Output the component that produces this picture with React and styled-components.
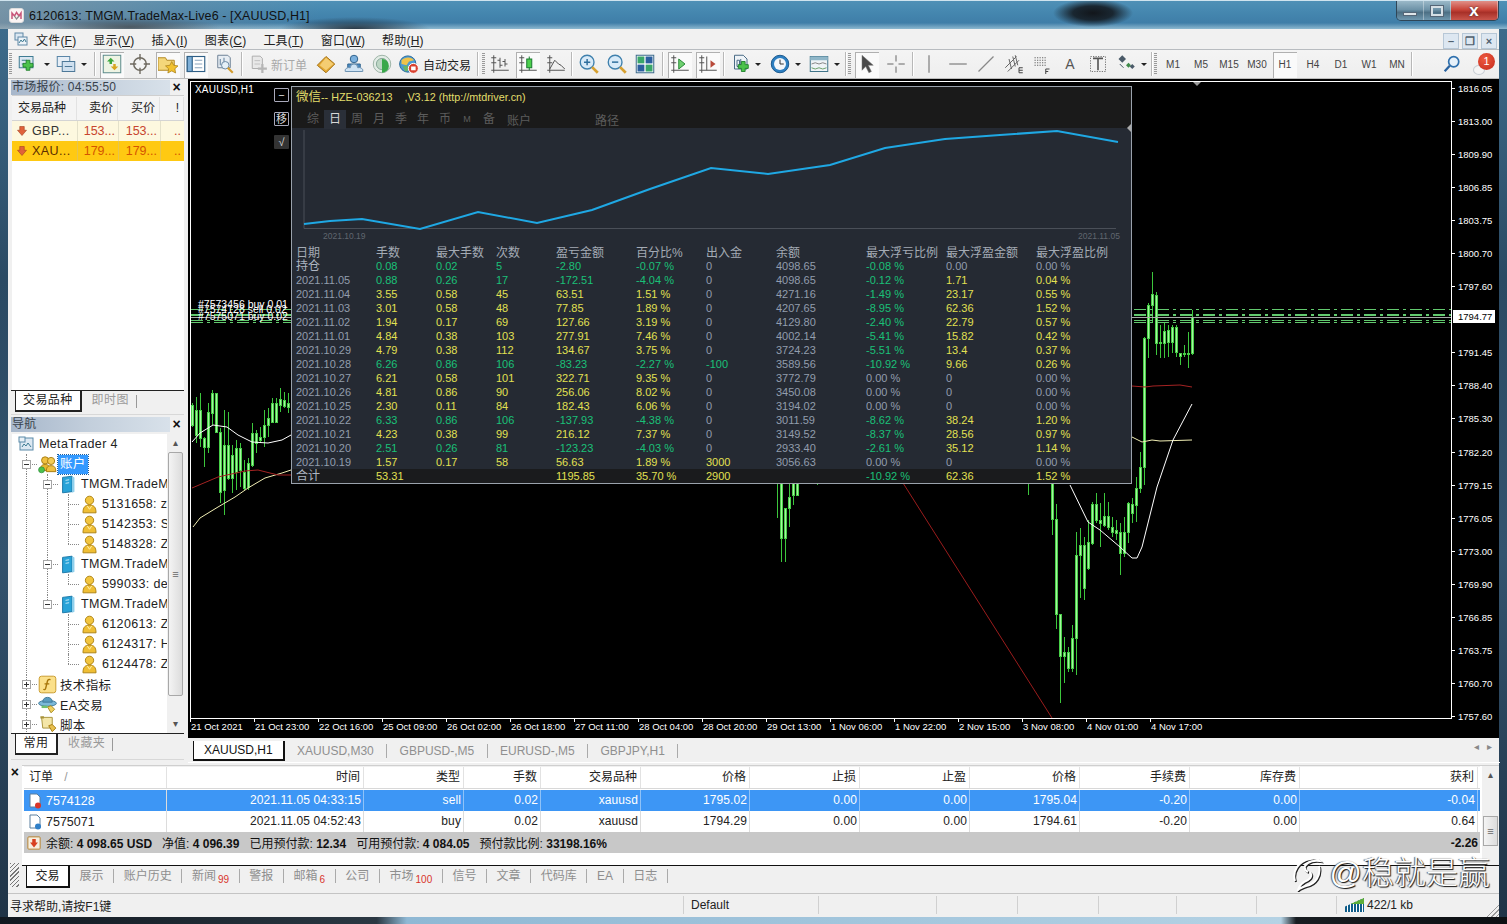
import React from "react"
import styled, { createGlobalStyle } from "styled-components"

const uiFont = `"Liberation Sans", "Noto Sans CJK SC", sans-serif`

const G = ({ s = 16, children }) => <svg width={s} height={s} viewBox="0 0 16 16" style={{ display: "block", position: "relative", flex: "none" }}>{children}</svg>

const Plus = ({ x = 8, y = 8 }) => (
  <path d={`M${x + 2.5} ${y}h3v2.5h2.5v3h-2.5v2.5h-3v-2.5h-2.5v-3h2.5z`} fill="#4cc24c" stroke="#1d7f2a" strokeWidth=".7" />
)
const Axes = () => <path d="M3 1v14M1 13h14M1 3h4M1 7h4" stroke="#555" strokeWidth=".8" fill="none" />

const icons = {
  newChart: <><rect x="1" y="2" width="11" height="9" fill="#dbe7f2" stroke="#3f7c93" strokeWidth=".8" /><path d="M3 5h4M3 8h2" stroke="#3f7c93" strokeWidth=".8" /><Plus x={4} y={5} /></>,
  profile: <><rect x="1" y="2" width="10" height="8" fill="#e6eef6" stroke="#5a86a8" strokeWidth=".8" /><rect x="5" y="6" width="10" height="8" fill="#cfe0ef" stroke="#4d7898" strokeWidth=".8" /><path d="M7 10h6" stroke="#4d7898" strokeWidth=".8" /></>,
  market: <><rect x="1" y="1" width="14" height="14" fill="#eef4e4" stroke="#5b8a8a" strokeWidth=".8" /><path d="M4 6l3-3 3 3H8v2H6V6z" fill="#3ca83c" /><path d="M7 10l3 3 3-3h-2V8H9v2z" fill="#d8a520" /></>,
  target: <><circle cx="8" cy="8" r="5" fill="#f4f4f4" stroke="#6f6a60" strokeWidth="1.2" /><path d="M8 0v5M8 11v5M0 8h5M11 8h5" stroke="#6f6a60" strokeWidth="1.1" /></>,
  fav: <><path d="M0 3h6l1 2h6v8H0z" fill="#f4d77a" stroke="#b58a26" strokeWidth=".8" /><path d="M11 6l1.5 3 3.5.5-2.5 2.3.6 3.4-3.1-1.7-3.1 1.7.6-3.4L6 9.5 9.5 9z" fill="#f2c230" stroke="#a9801a" strokeWidth=".6" /></>,
  nav: <><rect x="1" y="2" width="14" height="12" fill="#fff" stroke="#2f5f86" strokeWidth=".9" /><rect x="1" y="2" width="4" height="12" fill="#7fb0d8" stroke="#2f5f86" strokeWidth=".9" /><path d="M7 5h6M7 8h6M7 11h6" stroke="#8aa4bc" strokeWidth=".8" /></>,
  tester: <><path d="M3 1h8l2 2v8H3z" fill="#e8eef4" stroke="#6f8296" strokeWidth=".8" /><path d="M5 4v5M8 3v5" stroke="#5f7f9a" strokeWidth=".8" /><circle cx="9" cy="9" r="3" fill="#e5f0f8" stroke="#6c8aa5" strokeWidth=".8" /><path d="M11 11l4 4" stroke="#d29b2d" strokeWidth="1.7" /></>,
  order: <><path d="M2 1h7l2 2v9H2z" fill="#e8e8e8" stroke="#a8a8a8" strokeWidth=".8" /><path d="M4 5h5M4 8h5" stroke="#bdbdbd" strokeWidth=".8" /><path d="M10 8h2v3h3v2h-3v3h-2v-3H7v-2h3z" fill="#b5b5b5" /></>,
  ordersBook: <><path d="M1 9l7-7 7 6-7 7z" fill="#e3a72f" stroke="#a5741a" strokeWidth=".8" /><path d="M3 9l5 4 6-5-6-5z" fill="#f4cd72" /></>,
  people: <><circle cx="8" cy="4" r="3" fill="#7bb0dd" stroke="#33658f" strokeWidth=".8" /><path d="M3 8h10v3H3z" fill="#4e8cc2" stroke="#33658f" strokeWidth=".8" /><path d="M1 14a3 2.5 0 0 1 4-3 3 3 0 0 1 6 0 3 2.5 0 0 1 4 3z" fill="#cfe3f4" stroke="#6e93b2" strokeWidth=".8" /></>,
  signal: <><circle cx="8" cy="8" r="7" fill="#e3ece6" stroke="#9fb5a8" strokeWidth=".8" /><circle cx="8" cy="8" r="4.5" fill="#bcd6c4" stroke="#8aa99a" strokeWidth=".8" /><path d="M8 4a4 4 0 0 1 0 11z" fill="#39a84a" /></>,
  auto: <><circle cx="7" cy="8" r="6.5" fill="#4b9bd4" stroke="#2a6b9c" strokeWidth=".8" /><path d="M2 5c3-3 8-3 10 0l-4 1-2 3-4-1z" fill="#efc34a" /><path d="M3 10l4-1 1 4-3 1z" fill="#66b46a" /><circle cx="11.5" cy="11.5" r="4" fill="#d9412f" stroke="#fff" strokeWidth=".8" /><rect x="9.7" y="10" width="3.6" height="3" fill="#fff" /></>,
  bars: <><Axes /><path d="M8 3v8M6 5h2M8 9h2M12 4v6M10 6h2M12 8h2" stroke="#555" strokeWidth=".8" fill="none" /></>,
  candle: <><Axes /><path d="M9 2v11" stroke="#1b7a30" strokeWidth=".8" /><rect x="7" y="4" width="4" height="7" fill="#4dd04d" stroke="#1b7a30" strokeWidth=".8" /></>,
  line: <><Axes /><path d="M3 12l4-7 3 3 2 1 3 3" stroke="#555" strokeWidth=".8" fill="none" /></>,
  zoomIn: <><circle cx="6.5" cy="6.5" r="5.5" fill="#d8eaf8" stroke="#3f80ad" strokeWidth="1.1" /><path d="M4 6.5h5M6.5 4v5" stroke="#2f6f9e" strokeWidth="1.2" /><path d="M10.5 10.5l4.5 4.5" stroke="#d6a030" strokeWidth="2.2" /></>,
  zoomOut: <><circle cx="6.5" cy="6.5" r="5.5" fill="#d8eaf8" stroke="#3f80ad" strokeWidth="1.1" /><path d="M4 6.5h5" stroke="#2f6f9e" strokeWidth="1.2" /><path d="M10.5 10.5l4.5 4.5" stroke="#d6a030" strokeWidth="2.2" /></>,
  tile: <><rect x="1" y="1" width="14" height="14" fill="#fff" stroke="#3b6a8a" strokeWidth=".8" /><rect x="2" y="2" width="5.5" height="5.5" fill="#3aa66a" /><rect x="8.5" y="2" width="5.5" height="5.5" fill="#2b5f9e" /><rect x="2" y="8.5" width="5.5" height="5.5" fill="#2b5f9e" /><rect x="8.5" y="8.5" width="5.5" height="5.5" fill="#3aa66a" /></>,
  scrollAuto: <><Axes /><path d="M7 4l5 4-5 4z" fill="#6fd06f" stroke="#2b8a3a" strokeWidth=".8" /></>,
  shift: <><Axes /><path d="M7 2v11" stroke="#555" strokeWidth=".8" /><path d="M14 8l-4-3v6z" fill="#b84a3a" /></>,
  addInd: <><path d="M2 1h7l3 3v8H2z" fill="#eef3f7" stroke="#4a6b85" strokeWidth=".8" /><path d="M4 5h2v5H4zM7 4v7" stroke="#4a6b85" strokeWidth=".8" fill="none" /><Plus x={5} y={6} /></>,
  clock: <><circle cx="8" cy="8" r="7" fill="#2d7fc1" stroke="#1c5a8f" strokeWidth=".8" /><circle cx="8" cy="8" r="4.8" fill="#f4f7fa" /><path d="M8 4.5V8h3" stroke="#333" strokeWidth=".8" fill="none" /></>,
  template: <><rect x="1" y="2" width="14" height="12" fill="#eef3f6" stroke="#3f7388" strokeWidth=".8" /><rect x="1" y="2" width="14" height="3" fill="#8fb6c8" /><path d="M2 8l3-1 3 1 3-1 3 1" stroke="#888" strokeWidth=".8" fill="none" /><path d="M2 11l3 1 3-1 3 1 3-1" stroke="#6fa36f" strokeWidth=".8" fill="none" /></>,
  cursor: <path d="M4 1l9 8H9l2.5 5-2 1L7 10l-3 3z" fill="#4a4a4a" stroke="#777" strokeWidth=".4" />,
  cross: <path d="M8 1v5M8 10v5M1 8h5M10 8h5" stroke="#666" strokeWidth=".8" />,
  vline: <path d="M8 1v14" stroke="#666" strokeWidth=".8" />,
  hline: <path d="M1 8h14" stroke="#666" strokeWidth=".8" />,
  trend: <path d="M2 14L14 2" stroke="#888" />,
  channel: <><path d="M1 11l9-9M3 14l9-9M4 4l2 8M7 2l2 8M9 1l2 8" stroke="#666" strokeWidth=".8" fill="none" /><path d="M12 11h3M12 13h3M12 15h3M12 11v4" stroke="#444" strokeWidth=".8" /></>,
  fibo: <><path d="M2 3h10M2 5h10M2 7h10M2 9h10" stroke="#666" strokeWidth=".8" strokeDasharray="1 1" /><path d="M11 12h3M11 14h2M11 12v4" stroke="#444" strokeWidth=".8" /></>,
  label: <><rect x="2" y="2" width="12" height="12" fill="none" stroke="#777" strokeWidth=".8" strokeDasharray="1 1" /><path d="M4 3.5h8M8 3.5V13" stroke="#555" strokeWidth="1.3" /></>,
  arrows: <><path d="M5 1L2 4l3 3 3-3z" fill="#4a5a68" /><path d="M8 9l2-2 2 2-2 2z" fill="#3f8a4a" /><path d="M13 8l2 2-2 2-2-2z" fill="#4a5a68" /><path d="M3 8l3 3" stroke="#4a5a68" strokeWidth=".8" /></>,
  search: <><circle cx="9.5" cy="6" r="4.5" fill="#e7f1fa" stroke="#2f70ad" strokeWidth="1.5" /><path d="M6 9.5L1.5 14.5" stroke="#2a63a0" strokeWidth="2" /></>,
  mt: <><rect x="2" y="2" width="13" height="12" fill="#dde8f2" stroke="#5a8aa8" /><rect x="1" y="1" width="6" height="5" fill="#e8f0f6" stroke="#5a8aa8" /><path d="M4 11l2-3 2 2 2-3 3 4" stroke="#3f7c93" fill="none" /></>,
  accounts: <><circle cx="6" cy="4.5" r="3" fill="#f0c040" stroke="#a87c10" strokeWidth=".8" /><path d="M2 13c0-4 1.5-5 4-5s4 1 4 5z" fill="#e8b830" stroke="#a87c10" strokeWidth=".8" /><circle cx="11" cy="5" r="3" fill="#f4cc55" stroke="#a87c10" strokeWidth=".8" /><path d="M7 14c0-4 1.5-5 4-5s4 1 4 5z" fill="#f0c040" stroke="#a87c10" strokeWidth=".8" /><circle cx="3" cy="12.5" r="2.5" fill="#4cc24c" stroke="#2a8a3a" strokeWidth=".6" /></>,
  server: <><path d="M3 2l8-1v13l-8 1z" fill="#29a3d8" stroke="#1c78a8" strokeWidth=".8" /><path d="M11 1l2 1v12l-2 1z" fill="#8fd0ec" /><path d="M5.500 4.500l3-.5M5.500 7l3-.5" stroke="#c9ecfa" strokeWidth=".8" /></>,
  person: <><circle cx="8" cy="4.5" r="3.500" fill="#f2c53f" stroke="#ad8212" strokeWidth=".8" /><path d="M2.500 15c0-5 2-6.500 5.500-6.500s5.500 1.500 5.500 6.500z" fill="#efbe34" stroke="#ad8212" strokeWidth=".8" /><path d="M6 9l2 3 2-3" stroke="#fff2b0" strokeWidth=".8" fill="none" /></>,
  func: <><rect x="1" y="1" width="14" height="14" rx="2" fill="#fbe08a" stroke="#c89a2a" strokeWidth=".8" /><path d="M10.500 4c-2 -1-2.500 .5-3 3l-1 4c-.3 1.500-1.200 1.500-2 1M5.500 7.500h4" stroke="#a8760a" strokeWidth="1.200" fill="none" /></>,
  ea: <><ellipse cx="8" cy="7" rx="7.500" ry="2.500" fill="#7bb8d8" stroke="#3f7a9a" strokeWidth=".8" /><path d="M4 6c0-3 2-4 4-4s4 1 4 4z" fill="#5a9cc0" stroke="#3f7a9a" strokeWidth=".8" /><path d="M8 10l3-1 3 3-3 3z" fill="#f0d060" stroke="#a88a20" strokeWidth=".8" /><path d="M3 9h5v2H3z" fill="#6fbf6f" /></>,
  script: <><path d="M3 2h9v9H4z" fill="#f4e6a8" stroke="#a8923a" strokeWidth=".8" /><path d="M2 2h3M11 11h3" stroke="#a8923a" strokeWidth="1.800" /><path d="M9 9l3-1 3 3-3 3z" fill="#e8c050" stroke="#a87c10" strokeWidth=".8" /></>,
  sell: <><path d="M3 1h7l3 3v10H3z" fill="#fff" stroke="#5a7f9e" /><circle cx="11" cy="12.500" r="3" fill="#d9362a" /></>,
  buy: <><path d="M3 1h7l3 3v10H3z" fill="#fff" stroke="#5a7f9e" /><circle cx="11" cy="12.500" r="3" fill="#2f7fc8" /></>,
  downArrow: <path d="M5 2h6v5h3l-6 7-6-7h3z" fill="#e0623a" stroke="#a5401f" strokeWidth=".8" />,
  balance: <><rect x="1" y="1" width="14" height="14" rx="1" fill="#f6efe0" stroke="#b47a1f" /><path d="M6 3.500h4v4h2.500L8 13 3.500 7.500H6z" fill="#d8401f" /></>,
}

const Icon = ({ name, s }) => <G s={s}>{icons[name]}</G>
const TI = ({ n }) => <Icon name={n} s={20} />

const AppMark = () => (
  <svg width="15" height="15" viewBox="0 0 15 15" style={{ display: "block" }}>
    <rect x=".5" y=".5" width="14" height="14" rx="2.5" fill="#fbf4f4" stroke="#ddd" />
    <path d="M3 11V5l2.5 3L7.5 4.5 10 8l2-3v6" fill="none" stroke="#c8557a" strokeWidth="1.5" />
    <path d="M5.5 8l2 3 2.5-3" fill="none" stroke="#8a8a8a" strokeWidth="1.2" />
  </svg>
)

const MenuMark = () => (
  <svg width="14" height="14" viewBox="0 0 14 14" style={{ display: "block" }}>
    <rect x="1" y="1" width="8" height="7" fill="#dce8f2" stroke="#5f88a6" />
    <rect x="4" y="5" width="9" height="8" fill="#edf3f8" stroke="#5f88a6" />
    <path d="M5 11l2-3 1.500 2 2-3 1.500 3" stroke="#3f7c93" fill="none" />
  </svg>
)

const SwirlMark = () => (
  <svg width="32" height="36" viewBox="0 0 32 36" style={{ display: "block", filter: "drop-shadow(1px 1px 0 #222)" }}>
    <path d="M4 26C1 17 7 6 19 4c4-1 8 0 10 2-5-1-12 0-15 5-1 3 1 5 3 6" fill="none" stroke="#fff" strokeWidth="2" />
    <path d="M28 11c2 9-3 18-13 20-3 1-6 2-8 4 1-4 5-8 10-10 3-2 4-5 2-8" fill="none" stroke="#fff" strokeWidth="2" />
  </svg>
)

const menus = [["文件", "F"], ["显示", "V"], ["插入", "I"], ["图表", "C"], ["工具", "T"], ["窗口", "W"], ["帮助", "H"]]

const priceLabels = ["1816.05", "1813.00", "1809.90", "1806.85", "1803.75", "1800.70", "1797.60", "", "1791.45", "1788.40", "1785.30", "1782.20", "1779.15", "1776.05", "1773.00", "1769.90", "1766.85", "1763.75", "1760.70", "1757.60"]

const timeLabels = ["21 Oct 2021", "21 Oct 23:00", "22 Oct 16:00", "25 Oct 09:00", "26 Oct 02:00", "26 Oct 18:00", "27 Oct 11:00", "28 Oct 04:00", "28 Oct 20:00", "29 Oct 13:00", "1 Nov 06:00", "1 Nov 22:00", "2 Nov 15:00", "3 Nov 08:00", "4 Nov 01:00", "4 Nov 17:00"]

// x, body top, body bottom, wick top, wick bottom (page pixels)
const candles = [
  [192, 405, 425, 403, 427], [196, 410, 435, 397, 443], [200, 410, 438, 393, 447], [204, 438, 447, 437, 467], [208, 412, 447, 403, 453],
  [212, 393, 413, 390, 425], [216, 393, 432, 393, 433], [220, 432, 492, 428, 503], [224, 445, 490, 410, 515], [228, 445, 478, 412, 480],
  [232, 455, 478, 445, 493], [236, 448, 472, 440, 490], [240, 448, 470, 443, 487], [244, 472, 488, 460, 490], [248, 463, 487, 458, 490],
  [252, 433, 465, 423, 467], [256, 433, 443, 430, 453], [260, 437, 440, 427, 443], [264, 425, 437, 410, 447], [268, 418, 425, 408, 437],
  [272, 403, 422, 398, 423], [276, 403, 422, 398, 423], [280, 399, 405, 388, 412], [284, 400, 406, 392, 408], [288, 403, 407, 393, 413],
  [777, 483, 483, 483, 518], [781, 483, 538, 483, 562], [785, 508, 538, 508, 562], [789, 497, 508, 483, 527], [793, 483, 495, 483, 505], [797, 483, 495, 483, 495],
  [817, 483, 483, 483, 485], [1028, 483, 483, 483, 495],
  [1052, 483, 519, 483, 535], [1056, 519, 614, 504, 629], [1060, 614, 656, 614, 703], [1064, 652, 656, 637, 683], [1068, 652, 668, 647, 672],
  [1072, 638, 668, 625, 672], [1076, 555, 638, 532, 675], [1080, 545, 555, 528, 598], [1084, 545, 588, 537, 600], [1088, 542, 568, 520, 570],
  [1092, 504, 543, 502, 545], [1096, 504, 520, 493, 523], [1100, 520, 523, 503, 547], [1104, 516, 525, 493, 527], [1108, 516, 527, 502, 530],
  [1112, 527, 532, 517, 537], [1116, 530, 533, 520, 540], [1120, 532, 553, 523, 575], [1124, 532, 553, 517, 557], [1128, 503, 532, 502, 543],
  [1132, 504, 513, 498, 523], [1136, 488, 505, 477, 522], [1140, 467, 488, 452, 493], [1144, 338, 467, 337, 485], [1148, 305, 338, 303, 358],
  [1152, 294, 305, 272, 323], [1156, 295, 343, 292, 355], [1160, 342, 343, 325, 358], [1164, 331, 343, 323, 358], [1168, 330, 342, 325, 357],
  [1172, 327, 342, 325, 353], [1176, 327, 352, 325, 357], [1180, 353, 356, 353, 365], [1184, 353, 354, 345, 357], [1188, 353, 354, 332, 368],
  [1192, 317, 353, 310, 355],
]

const stats = [
  ["持仓", "0.08", "0.02", "5", "-2.80", "-0.07 %", "0", "4098.65", "-0.08 %", "0.00", "0.00 %"],
  ["2021.11.05", "0.88", "0.26", "17", "-172.51", "-4.04 %", "0", "4098.65", "-0.12 %", "1.71", "0.04 %"],
  ["2021.11.04", "3.55", "0.58", "45", "63.51", "1.51 %", "0", "4271.16", "-1.49 %", "23.17", "0.55 %"],
  ["2021.11.03", "3.01", "0.58", "48", "77.85", "1.89 %", "0", "4207.65", "-8.95 %", "62.36", "1.52 %"],
  ["2021.11.02", "1.94", "0.17", "69", "127.66", "3.19 %", "0", "4129.80", "-2.40 %", "22.79", "0.57 %"],
  ["2021.11.01", "4.84", "0.38", "103", "277.91", "7.46 %", "0", "4002.14", "-5.41 %", "15.82", "0.42 %"],
  ["2021.10.29", "4.79", "0.38", "112", "134.67", "3.75 %", "0", "3724.23", "-5.51 %", "13.4", "0.37 %"],
  ["2021.10.28", "6.26", "0.86", "106", "-83.23", "-2.27 %", "-100", "3589.56", "-10.92 %", "9.66", "0.26 %"],
  ["2021.10.27", "6.21", "0.58", "101", "322.71", "9.35 %", "0", "3772.79", "0.00 %", "0", "0.00 %"],
  ["2021.10.26", "4.81", "0.86", "90", "256.06", "8.02 %", "0", "3450.08", "0.00 %", "0", "0.00 %"],
  ["2021.10.25", "2.30", "0.11", "84", "182.43", "6.06 %", "0", "3194.02", "0.00 %", "0", "0.00 %"],
  ["2021.10.22", "6.33", "0.86", "106", "-137.93", "-4.38 %", "0", "3011.59", "-8.62 %", "38.24", "1.20 %"],
  ["2021.10.21", "4.23", "0.38", "99", "216.12", "7.37 %", "0", "3149.52", "-8.37 %", "28.56", "0.97 %"],
  ["2021.10.20", "2.51", "0.26", "81", "-123.23", "-4.03 %", "0", "2933.40", "-2.61 %", "35.12", "1.14 %"],
  ["2021.10.19", "1.57", "0.17", "58", "56.63", "1.89 %", "3000", "3056.63", "0.00 %", "0", "0.00 %"],
]
const statHead = ["日期", "手数", "最大手数", "次数", "盈亏金额", "百分比%", "出入金", "余额", "最大浮亏比例", "最大浮盈金额", "最大浮盈比例"]
const statTotal = ["合计", "53.31", "", "", "1195.85", "35.70 %", "2900", "", "-10.92 %", "62.36", "1.52 %"]

const GREEN = "#1ac078"
const YELLOW = "#e2e052"
const GREY = "#929dad"

function statColor(row, i) {
  const loss = row[4].startsWith("-")
  if (i === 0) return GREY
  if (i === 7) return GREY
  if (i === 8) return row[i].startsWith("-") ? GREEN : GREY
  if (i === 6) return row[i] === "0" ? GREY : row[i].startsWith("-") ? GREEN : YELLOW
  if (i === 9 || i === 10) return parseFloat(row[i]) === 0 ? GREY : YELLOW
  return loss ? GREEN : YELLOW
}

const tree = [
  { root: true, icon: "mt", label: "MetaTrader 4" },
  { guides: [], box: "minus", icon: "accounts", label: "账户", selected: true },
  { guides: [1], box: "minus", icon: "server", label: "TMGM.TradeMax" },
  { guides: [1, 1], icon: "person", label: "5131658: zl" },
  { guides: [1, 1], icon: "person", label: "5142353: S" },
  { guides: [1, 1], end: true, icon: "person", label: "5148328: Z" },
  { guides: [1], box: "minus", icon: "server", label: "TMGM.TradeMax" },
  { guides: [1, 1], end: true, icon: "person", label: "599033: de" },
  { guides: [1], box: "minus", end: true, icon: "server", label: "TMGM.TradeMax" },
  { guides: [1, 0], icon: "person", label: "6120613: Z" },
  { guides: [1, 0], icon: "person", label: "6124317: H" },
  { guides: [1, 0], end: true, icon: "person", label: "6124478: Z" },
  { guides: [], box: "plus", icon: "func", label: "技术指标" },
  { guides: [], box: "plus", icon: "ea", label: "EA交易" },
  { guides: [], box: "plus", icon: "script", label: "脚本" },
]

const orderCols = "143px 197px 100px 77px 100px 109px 110px 110px 110px 110px 110px 178px"
const orderHead = ["时间", "类型", "手数", "交易品种", "价格", "止损", "止盈", "价格", "手续费", "库存费", "获利"]
const orders = [
  { id: "7574128", icon: "sell", on: true, cells: ["2021.11.05 04:33:15", "sell", "0.02", "xauusd", "1795.02", "0.00", "0.00", "1795.04", "-0.20", "0.00", "-0.04"] },
  { id: "7575071", icon: "buy", cells: ["2021.11.05 04:52:43", "buy", "0.02", "xauusd", "1794.29", "0.00", "0.00", "1794.61", "-0.20", "0.00", "0.64"] },
]

const termTabs = [["展示"], ["账户历史"], ["新闻", "99"], ["警报"], ["邮箱", "6"], ["公司"], ["市场", "100"], ["信号"], ["文章"], ["代码库"], ["EA"], ["日志"]]
const chartTabs = ["XAUUSD,M30", "GBPUSD-,M5", "EURUSD-,M5", "GBPJPY,H1"]
const statusCells = [676, 135, 118, 81, 81, 78, 80, 80]
const overlayTabs = ["综", "日", "周", "月", "季", "年", "币", "M", "备"]

function PriceChart() {
  return (
    <ChartSvg viewBox="191 82 1260 636">
      <g shapeRendering="crispEdges">
        {candles.map(([x, bt, bb, wt, wb]) => (
          <g key={x}>
            <line x1={x + 0.5} x2={x + 0.5} y1={wt} y2={wb} stroke="#3cc63c" />
            {bb > bt && <rect x={x - 0.5} y={bt} width="2" height={bb - bt} fill="#a6f5a0" stroke="#47cf47" />}
          </g>
        ))}
      </g>
      <g fill="none" strokeWidth="1">
        <polyline stroke="#fff" points="192,442 200,433 213,425 227,427 238,435 252,442 268,443 282,440 291,435" />
        <polyline stroke="#f1eeb4" points="193,527 200,518 218,507 235,497 248,488 265,478 282,473 291,470" />
        <polyline stroke="#a52323" points="192,488 218,477 245,471 258,470 278,475 291,475" />
        <polyline stroke="#a52323" points="1132,386 1145,387 1153,386 1180,385 1192,387" />
        <polyline stroke="#f1eeb4" points="1132,437 1142,442 1152,440 1160,441 1192,440" />
        <polyline stroke="#fff" points="1070,485 1088,522 1100,530 1120,547 1132,558 1137,558 1142,547 1157,487 1173,440 1192,404" />
        <line stroke="#9a1c1c" x1="903" y1="483" x2="1052" y2="718" />
      </g>
      <g stroke="#62c96e" strokeDasharray="12 4 3 4" shapeRendering="crispEdges">
        <line x1="191" x2="1451" y1="309.5" y2="309.5" />
        <line x1="191" x2="1451" y1="315" y2="315" strokeWidth="2" />
        <line x1="191" x2="1451" y1="320.5" y2="320.5" />
        <line x1="191" x2="1451" y1="322.5" y2="322.5" />
      </g>
      <line x1="191" x2="1451" y1="317.5" y2="317.5" stroke="#a8a8a8" shapeRendering="crispEdges" />
      <g fill="#fff" fontSize="10.5" fontFamily="Liberation Sans">
        <text x="198" y="308">#7573456 buy 0.01</text>
        <text x="198" y="313">#7574128 sell 0.02</text>
        <text x="198" y="320">#7575071 buy 0.02</text>
      </g>
    </ChartSvg>
  )
}

function StatsOverlay() {
  return (
    <Overlay>
      <OverlayHead>
        <OverlayTitle><big>微信</big>-- HZE-036213 &nbsp; &nbsp;,V3.12 (http://mtdriver.cn)</OverlayTitle>
        <OverlayTabs>
          {overlayTabs.map(t => <OverlayTab key={t} $on={t === "日"} $small={t === "M"}>{t}</OverlayTab>)}
          <OverlayLink>账户</OverlayLink>
          <OverlayLink $far>路径</OverlayLink>
        </OverlayTabs>
      </OverlayHead>
      <Curve viewBox="292 128 838 115">
        <path d="M304 130V228.5H1116" fill="none" stroke="#4a4f58" />
        <polyline fill="none" stroke="#1fa8e4" strokeWidth="2" points="304,224 330,221 362,219 420,229 478,212 537,223 592,210 650,189 711,168 768,174 830,165 885,148 945,139 1000,135 1057,131 1118,142" />
        <text x="323" y="239" fill="#60666f" fontSize="8.5" fontFamily="Liberation Sans">2021.10.19</text>
        <text x="1078" y="239" fill="#60666f" fontSize="8.5" fontFamily="Liberation Sans">2021.11.05</text>
      </Curve>
      <StatRow $head>{statHead.map(h => <span key={h}>{h}</span>)}</StatRow>
      {stats.map(row => (
        <StatRow key={row[0]}>
          {row.map((c, i) => <StatCell key={i} $c={i === 0 && row[0] === "持仓" ? "#aeb6c2" : statColor(row, i)} $big={i === 0 && row[0] === "持仓"}>{c}</StatCell>)}
        </StatRow>
      ))}
      <StatRow $total>
        {statTotal.map((c, i) => <StatCell key={i} $c={i === 0 ? "#aeb6c2" : i === 8 ? GREEN : YELLOW} $big={i === 0}>{c}</StatCell>)}
      </StatRow>
    </Overlay>
  )
}

function TreeRow({ item }) {
  if (item.root) {
    return (
      <Row $root>
        <Icon name={item.icon} />
        <RowLabel>{item.label}</RowLabel>
      </Row>
    )
  }
  return (
    <Row>
      {item.guides.map((g, i) => <Guide key={i} $on={g} />)}
      <Node $end={item.end}>
        {item.box && <Expander $plus={item.box === "plus"} />}
      </Node>
      <IconSlot><Icon name={item.icon} s={19} /></IconSlot>
      <RowLabel $selected={item.selected}>{item.label}</RowLabel>
    </Row>
  )
}

export default function App() {
  return (
    <Frame>
      <GlobalStyle />
      <TitleBar>
        <AppMark />
        <TitleText>6120613: TMGM.TradeMax-Live6 - [XAUUSD,H1]</TitleText>
        <Captions>
          <Caption><CaptionBar /></Caption>
          <Caption><CaptionBox /></Caption>
          <Caption $close>x</Caption>
        </Captions>
      </TitleBar>
      <Client>
        <MenuBar>
          <MenuLogo><MenuMark /></MenuLogo>
          {menus.map(([t, k]) => <MenuItem key={k}>{t}(<u>{k}</u>)</MenuItem>)}
          <MdiButtons>
            <MdiButton>–</MdiButton>
            <MdiButton>❐</MdiButton>
            <MdiButton>×</MdiButton>
          </MdiButtons>
        </MenuBar>
        <ToolBar>
          <Grip />
          <Tool><TI n="newChart" /></Tool><Caret $w={10} />
          <Tool><TI n="profile" /></Tool><Caret $w={8} />
          <Sep $l={6} $r={2} />
          <Tool $on><TI n="market" /></Tool>
          <Tool><TI n="target" /></Tool>
          <Tool $on><TI n="fav" /></Tool>
          <Tool $on><TI n="nav" /></Tool>
          <Tool><TI n="tester" /></Tool>
          <Sep $l={3} $r={2} />
          <TextTool $pl={5} $gap={3} $w={67} $off><Icon name="order" s={18} />新订单</TextTool>
          <Tool><TI n="ordersBook" /></Tool>
          <Tool><TI n="people" /></Tool>
          <Tool><TI n="signal" /></Tool>
          <TextTool $pl={3} $gap={4} $w={75}><Icon name="auto" s={20} />自动交易</TextTool>
          <Sep $l={6} $r={2} />
          <Grip $w={5} />
          <Tool><TI n="bars" /></Tool>
          <Tool $on><TI n="candle" /></Tool>
          <Tool><TI n="line" /></Tool>
          <Sep $l={1} $r={2} />
          <Tool><TI n="zoomIn" /></Tool>
          <Tool><TI n="zoomOut" /></Tool>
          <Tool><TI n="tile" /></Tool>
          <Sep $l={3} $r={2} />
          <Tool $on><TI n="scrollAuto" /></Tool>
          <Tool $on><TI n="shift" /></Tool>
          <Sep $l={1} $r={3} />
          <Tool><TI n="addInd" /></Tool><Caret $w={8} $ml={-2} />
          <Tool $ml={4}><TI n="clock" /></Tool><Caret $w={8} />
          <Tool $ml={3}><TI n="template" /></Tool><Caret $w={8} />
          <Sep $l={4} $r={0} />
          <Grip />
          <Tool $on><TI n="cursor" /></Tool>
          <Tool $ml={1}><TI n="cross" /></Tool>
          <Sep $l={2} $r={1} />
          <Tool><TI n="vline" /></Tool>
          <Tool $ml={1}><TI n="hline" /></Tool>
          <Tool><TI n="trend" /></Tool>
          <Tool><TI n="channel" /></Tool>
          <Tool><TI n="fibo" /></Tool>
          <Tool><LetterA>A</LetterA></Tool>
          <Tool><TI n="label" /></Tool>
          <Tool><TI n="arrows" /></Tool><Caret $w={8} />
          <Sep $l={3} $r={0} />
          <Grip />
          {["M1", "M5", "M15", "M30", "H1", "H4", "D1", "W1", "MN"].map(p => <Tool key={p} $on={p === "H1"}><Period>{p}</Period></Tool>)}
          <Sep $l={0} $r={0} />
          <ToolRight>
            <Tool><Icon name="search" s={18} /></Tool>
            <Tool><ChatBubble /><Badge>1</Badge></Tool>
          </ToolRight>
        </ToolBar>
        <Workspace>
          <Sidebar>
            <MarketPanel>
              <PanelTitle>市场报价: 04:55:50<Close>×</Close></PanelTitle>
              <QuoteHead>
                <span>交易品种</span><span>卖价</span><span>买价</span><span>!</span>
              </QuoteHead>
              <QuoteRow>
                <Symbol><Icon name="downArrow" s={12} />GBP...</Symbol><Price>153...</Price><Price>153...</Price><Price>..</Price>
              </QuoteRow>
              <QuoteRow $on>
                <Symbol><Icon name="downArrow" s={12} />XAU...</Symbol><Price>179...</Price><Price>179...</Price><Price>..</Price>
              </QuoteRow>
              <PanelFill />
              <PanelTabs>
                <PanelTab $on>交易品种</PanelTab>
                <PanelTab $sep>即时图</PanelTab>
              </PanelTabs>
            </MarketPanel>
            <NavPanel>
              <PanelTitle>导航<Close>×</Close></PanelTitle>
              <NavBody>
                <NavList>{tree.map((item, i) => <TreeRow key={i} item={item} />)}</NavList>
                <NavScroll>
                  <ScrollArrow>▴</ScrollArrow>
                  <ScrollThumb>≡</ScrollThumb>
                  <ScrollArrow>▾</ScrollArrow>
                </NavScroll>
              </NavBody>
              <PanelTabs $nav>
                <PanelTab $on $w={43}>常用</PanelTab>
                <PanelTab $sep>收藏夹</PanelTab>
              </PanelTabs>
            </NavPanel>
          </Sidebar>
          <ChartColumn>
            <ChartPane>
              <ChartMain>
                <Plot>
                  <PriceChart />
                  <ChartName>XAUUSD,H1</ChartName>
                  <SideButton $top={6}>−</SideButton>
                  <SideButton $top={30}>移</SideButton>
                  <SideButton $top={53} $dim>√</SideButton>
                  <TopMark />
                  <StatsOverlay />
                  <OverlayNotch />
                </Plot>
                <PriceAxis>
                  {priceLabels.map((p, i) => <PriceTick key={i} $blank={!p}>{p}</PriceTick>)}
                  <LastPrice>1794.77</LastPrice>
                </PriceAxis>
              </ChartMain>
              <TimeAxis>
                {timeLabels.map(t => <TimeTick key={t}>{t}</TimeTick>)}
              </TimeAxis>
            </ChartPane>
            <ChartTabs>
              <ChartTab $on>XAUUSD,H1</ChartTab>
              {chartTabs.map(t => <ChartTab key={t}>{t}</ChartTab>)}
              <TabArrows><span>◂</span><span>▸</span></TabArrows>
            </ChartTabs>
          </ChartColumn>
        </Workspace>
        <Terminal>
          <TermStrip>
            <Close>×</Close>
            <StripGrip />
          </TermStrip>
          <TermBody>
            <TermTable>
              <OrderGrid>
                <OrderRow $head>
                  <HeadCell $left>订单 <Sort>/</Sort></HeadCell>
                  {orderHead.map((h, i) => <HeadCell key={i}>{h}</HeadCell>)}
                </OrderRow>
                {orders.map(o => (
                  <OrderRow key={o.id} $on={o.on}>
                    <OrderId><Icon name={o.icon} />{o.id}</OrderId>
                    {o.cells.map((c, i) => <OrderCell key={i} $on={o.on}>{c}</OrderCell>)}
                  </OrderRow>
                ))}
                <Summary>
                  <SummaryIcon><Icon name="balance" s={14} /></SummaryIcon>
                  <span>余额: <b>4 098.65 USD</b></span>
                  <span>净值: <b>4 096.39</b></span>
                  <span>已用预付款: <b>12.34</b></span>
                  <span>可用预付款: <b>4 084.05</b></span>
                  <span>预付款比例: <b>33198.16%</b></span>
                  <SummaryTotal>-2.26</SummaryTotal>
                </Summary>
              </OrderGrid>
              <TermScroll>
                <ScrollArrow>▴</ScrollArrow>
                <TermThumb>≡</TermThumb>
              </TermScroll>
            </TermTable>
            <TermTabs>
              <TermTab $on>交易</TermTab>
              {termTabs.map(([t, n]) => <TermTab key={t}>{t}{n && <TabCount>{n}</TabCount>}</TermTab>)}
            </TermTabs>
          </TermBody>
        </Terminal>
        <StatusBar>
          {statusCells.map((w, i) => <StatusCell key={i} $w={w} $first={i === 0}>{i === 0 ? "寻求帮助,请按F1键" : i === 1 ? "Default" : ""}</StatusCell>)}
          <StatusCell $last><SignalBars />422/1 kb</StatusCell>
          <ResizeGrip />
        </StatusBar>
        <Watermark><SwirlMark /><span>@稳就是赢</span></Watermark>
      </Client>
      <BottomEdge />
    </Frame>
  )
}

const GlobalStyle = createGlobalStyle`
  html, body {
    margin: 0;
    padding: 0;
    width: 1507px;
    height: 924px;
    overflow: hidden;
    background: #3d6f92;
  }
  * { box-sizing: border-box; }
  #root { font-family: ${uiFont}; font-size: 12px; color: #222; }
`

const Frame = styled.div`
  width: 1507px;
  height: 924px;
  display: flex;
  flex-direction: column;
  position: relative;
  background: linear-gradient(180deg, #3f6f90 0, #2b4a63 30%, #33536e 60%, #1f3346 100%);
`

const TitleBar = styled.div`
  height: 29px;
  display: flex;
  align-items: center;
  padding: 0 8px 0 9px;
  border-top: 1px solid #cfe3ee;
  background:
    radial-gradient(ellipse 40px 14px at 1093px 12px, #12161b 0, rgba(18, 22, 27, .85) 50%, transparent 100%),
    radial-gradient(ellipse 75px 12px at 355px 28px, rgba(30, 42, 54, .9) 0, transparent 100%),
    radial-gradient(ellipse 90px 10px at 130px 26px, rgba(60, 66, 72, .75) 0, transparent 100%),
    linear-gradient(90deg, rgba(150, 155, 160, .6) 0, rgba(120, 140, 155, .35) 180px, transparent 320px),
    linear-gradient(180deg, #4f90b6 0, #4688b0 35%, #3f7ea8 78%, #8db8d0 100%);
`

const TitleText = styled.div`
  margin-left: 5px;
  margin-top: 1px;
  font-size: 12.5px;
  letter-spacing: .1px;
  color: #111;
`

const Captions = styled.div`
  margin-left: auto;
  align-self: flex-start;
  display: flex;
  height: 20px;
  border: 1px solid #2f4657;
  border-top: 0;
  border-radius: 0 0 5px 5px;
  overflow: hidden;
`

const Caption = styled.div`
  width: ${p => (p.$close ? 47 : 27)}px;
  display: flex;
  align-items: center;
  justify-content: center;
  border-right: 1px solid rgba(255, 255, 255, .35);
  color: #fff;
  font-weight: 700;
  font-size: 17px;
  line-height: 1;
  text-shadow: 0 0 2px #333;
  background: ${p => p.$close
    ? "linear-gradient(180deg, #e09088 0, #c9453a 45%, #a83028 60%, #c9564c 100%)"
    : "linear-gradient(180deg, #9ab8c8 0, #6e93a8 45%, #4d7085 60%, #6f97ae 100%)"};
`

const CaptionBar = styled.div`
  width: 14px;
  height: 4px;
  margin-top: 6px;
  background: #dfe6ea;
  border: 1px solid #567;
`

const CaptionBox = styled.div`
  width: 12px;
  height: 10px;
  border: 2px solid #d5dfe5;
  outline: 1px solid #567;
`

const Client = styled.div`
  margin: 0 8px;
  height: 888px;
  background: #f0f0f0;
  display: flex;
  flex-direction: column;
  position: relative;
`

const MenuBar = styled.div`
  height: 21px;
  display: flex;
  align-items: center;
  gap: 17px;
  padding: 0 2px 0 28px;
  position: relative;
  border-bottom: 1px solid #b8bcc0;
  background: #f1f1f1;
`

const MenuLogo = styled.div`
  position: absolute;
  left: 6px;
  top: 3px;
`

const MenuItem = styled.div`
  font-size: 12px;
  color: #222;
  letter-spacing: .2px;
  white-space: nowrap;
`

const MdiButtons = styled.div`
  margin-left: auto;
  display: flex;
  gap: 3px;
  margin-top: 4px;
`

const MdiButton = styled.div`
  width: 16px;
  height: 16px;
  display: flex;
  align-items: center;
  justify-content: center;
  background: #dde7f1;
  border: 1px solid #b7c7d6;
  color: #50606e;
  font-size: 11px;
  font-weight: 700;
  line-height: 1;
`

const ToolBar = styled.div`
  height: 29px;
  display: flex;
  align-items: stretch;
  padding: 1px 2px 1px 0;
  background: linear-gradient(180deg, #f4f4f4 0, #eeeeee 100%);
  border-bottom: 1px solid #bcbcbc;
`

const Grip = styled.div`
  width: ${p => p.$w || 6}px;
  flex: none;
  margin: 2px 0;
  background: repeating-linear-gradient(180deg, #9a9a9a 0, #9a9a9a 1px, transparent 1px, transparent 2px) 1px 0 / 3px 100% no-repeat;
`

const Tool = styled.div`
  position: relative;
  width: 28px;
  flex: none;
  margin-left: ${p => p.$ml || 0}px;
  display: flex;
  align-items: center;
  justify-content: center;
  ${p => p.$on && `
    &::before {
      content: "";
      position: absolute;
      inset: 1px 2px -1px;
      background: #fafafa;
      border-top: 1px solid #b0b0b0;
      border-left: 1px solid #b0b0b0;
    }
  `}
`

const TextTool = styled.div`
  width: ${p => p.$w}px;
  flex: none;
  display: flex;
  align-items: center;
  gap: ${p => p.$gap}px;
  padding-left: ${p => p.$pl}px;
  font-size: 12px;
  color: ${p => (p.$off ? "#a8a8a8" : "#222")};
  white-space: nowrap;
`

const Caret = styled.div`
  width: ${p => p.$w}px;
  flex: none;
  margin-left: ${p => p.$ml || 0}px;
  display: flex;
  align-items: center;
  justify-content: center;
  &::after {
    content: "";
    border: 3px solid transparent;
    border-top: 3px solid #222;
    border-bottom: 0;
  }
`

const Sep = styled.div`
  width: 2px;
  flex: none;
  margin: 1px ${p => p.$r}px 1px ${p => p.$l}px;
  background: linear-gradient(90deg, #b8b8b8 50%, #fff 50%);
`

const Period = styled.span`
  position: relative;
  font-size: 10px;
  color: #444;
`

const LetterA = styled.span`
  font-size: 14px;
  color: #555;
`

const ToolRight = styled.div`
  margin-left: auto;
  display: flex;
  gap: 3px;
`

const ChatBubble = styled.div`
  position: absolute;
  left: 4px;
  bottom: 2px;
  width: 12px;
  height: 10px;
  border: 1px solid #c8ced4;
  border-radius: 50%;
  background: #f4f4f4;
`

const Badge = styled.div`
  position: absolute;
  right: 2px;
  top: 2px;
  width: 17px;
  height: 17px;
  border-radius: 50%;
  background: radial-gradient(circle at 40% 35%, #ee5a40, #c42a1c);
  color: #fff;
  font-size: 11px;
  line-height: 17px;
  text-align: center;
`

const Workspace = styled.div`
  height: 684px;
  display: flex;
`

const Sidebar = styled.div`
  width: 180px;
  flex: none;
  padding: 1px 4px 0 3px;
  display: flex;
  flex-direction: column;
`

const MarketPanel = styled.div`
  height: 335px;
  display: flex;
  flex-direction: column;
`

const NavPanel = styled.div`
  flex: 1;
  display: flex;
  flex-direction: column;
  margin-top: 2px;
`

const PanelTitle = styled.div`
  height: 15px;
  flex: none;
  position: relative;
  padding-left: 1px;
  line-height: 15px;
  font-size: 12px;
  color: #39424c;
  letter-spacing: .2px;
  margin-right: 14px;
  background: linear-gradient(90deg, #a7b7cb 0, #c3cfdc 50%, #d8e1ea 100%);
`

const Close = styled.span`
  position: absolute;
  right: -11px;
  top: 0;
  font-size: 14px;
  font-weight: 700;
  line-height: 15px;
  color: #111;
`

const QuoteGrid = styled.div`
  display: grid;
  grid-template-columns: 65px 41px 42px 24px;
  margin-left: 1px;
  flex: none;
`

const QuoteHead = styled(QuoteGrid)`
  height: 26px;
  align-items: center;
  background: #f4f4f4;
  border-top: 1px solid #cfcfcf;
  border-bottom: 1px solid #d4d4d4;
  font-size: 12px;
  & > span {
    text-align: right;
    padding-right: 4px;
    line-height: 23px;
    border-right: 1px solid #e2e2e2;
  }
  & > span:first-child { text-align: left; padding-left: 6px; }
`

const QuoteRow = styled(QuoteGrid)`
  height: 20px;
  align-items: center;
  font-size: 12.5px;
  background: ${p => (p.$on ? "#ffc912" : "#fdf8df")};
  color: ${p => (p.$on ? "#d45500" : "#c8452e")};
  & > div:first-child { color: ${p => (p.$on ? "#5c2d00" : "#333")}; }
`

const Symbol = styled.div`
  display: flex;
  align-items: center;
  gap: 4px;
  padding-left: 4px;
  letter-spacing: .4px;
`

const Price = styled.div`
  text-align: right;
  padding-right: 3px;
  line-height: 20px;
  border-left: 1px solid rgba(190, 190, 170, .4);
`

const PanelFill = styled.div`
  flex: 1;
  margin-left: 1px;
  background: #fff;
`

const PanelTabs = styled.div`
  height: ${p => (p.$nav ? 27 : 25)}px;
  flex: none;
  display: flex;
  align-items: flex-start;
  padding-left: 4px;
  border-top: 1px solid #222;
  border-bottom: 1px solid #d8d8d8;
  background: #f0f0f0;
`

const PanelTab = styled.div`
  width: ${p => (p.$w ? `${p.$w}px` : "auto")};
  height: 21px;
  line-height: 19px;
  font-size: 12px;
  letter-spacing: .4px;
  text-align: center;
  ${p => p.$on
    ? `padding: 0 7px; background: #fff; color: #222; border: 1px solid #222; border-top: 0; border-right-width: 2px; border-bottom-width: 2px;`
    : `color: #9a9a9a; padding: 0 8px 0 10px;`}
  ${p => p.$sep && `position: relative; &::after { content: ""; position: absolute; right: 0; top: 4px; bottom: 4px; width: 1px; background: #999; }`}
`

const NavBody = styled.div`
  height: 299px;
  flex: none;
  display: flex;
  background: #fff;
  margin: 2px 0 0 1px;
`

const NavList = styled.div`
  width: 155px;
  flex: none;
  overflow: hidden;
`

const Row = styled.div`
  height: 20px;
  display: flex;
  align-items: center;
  padding-left: ${p => (p.$root ? 6 : 4)}px;
  white-space: nowrap;
  font-size: 12.5px;
  letter-spacing: .35px;
  color: #222;
`

const Guide = styled.div`
  width: 21px;
  height: 20px;
  flex: none;
  ${p => p.$on && `background: repeating-linear-gradient(180deg, #888 0, #888 1px, transparent 1px, transparent 2px) 10px 0 / 1px 100% no-repeat;`}
`

const Node = styled.div`
  width: 21px;
  height: 20px;
  flex: none;
  position: relative;
  display: flex;
  align-items: center;
  &::before {
    content: "";
    position: absolute;
    left: 10px;
    top: 0;
    bottom: ${p => (p.$end ? "50%" : 0)};
    border-left: 1px dotted #888;
  }
  &::after {
    content: "";
    position: absolute;
    left: 10px;
    right: 0;
    top: 50%;
    border-top: 1px dotted #888;
  }
`

const Expander = styled.div`
  position: relative;
  z-index: 1;
  width: 9px;
  height: 9px;
  margin-left: 6px;
  background: linear-gradient(#333, #333) center / 5px 1px no-repeat ${p => (p.$plus ? ", linear-gradient(#333, #333) center / 1px 5px no-repeat" : "")}, #fff;
  border: 1px solid #a5a5a5;
`

const IconSlot = styled.div`
  width: 16px;
  margin-left: 2px;
  flex: none;
  display: flex;
  justify-content: center;
`

const RowLabel = styled.div`
  margin-left: 3px;
  padding: 0 2px;
  ${p => p.$selected && `background: #3399ff; color: #fff; outline: 1px dotted #1b5c9c; line-height: 19px;`}
`

const NavScroll = styled.div`
  width: 17px;
  flex: none;
  display: flex;
  flex-direction: column;
  align-items: stretch;
  background: #f0f0f0;
`

const ScrollArrow = styled.div`
  height: 18px;
  flex: none;
  text-align: center;
  font-size: 10px;
  line-height: 18px;
  color: #555;
`

const ScrollThumb = styled.div`
  flex: 1;
  margin: 0 1px 19px;
  display: flex;
  align-items: center;
  justify-content: center;
  font-size: 11px;
  color: #666;
  background: linear-gradient(90deg, #f4f4f4, #dcdcdc);
  border: 1px solid #a8a8a8;
  border-radius: 2px;
`

const ChartColumn = styled.div`
  flex: 1;
  display: flex;
  flex-direction: column;
`

const ChartPane = styled.div`
  height: 659px;
  margin-right: 1px;
  padding: 2px 0 0 2px;
  background: #000;
  color: #fff;
`

const ChartMain = styled.div`
  display: flex;
  height: 638px;
`

const Plot = styled.div`
  position: relative;
  width: 1262px;
  height: 638px;
  flex: none;
  border: 1px solid #fff;
`

const ChartSvg = styled.svg`
  display: block;
  width: 1260px;
  height: 636px;
`

const ChartName = styled.div`
  position: absolute;
  left: 4px;
  top: 2px;
  font-size: 10px;
  color: #fff;
  letter-spacing: .2px;
`

const SideButton = styled.div`
  position: absolute;
  left: 83px;
  top: ${p => p.$top}px;
  width: 15px;
  height: 14px;
  display: flex;
  align-items: center;
  justify-content: center;
  font-size: 11px;
  line-height: 1;
  color: #ddd;
  border: ${p => (p.$dim ? "0" : "1px solid #aab")};
  border-radius: 1px;
  background: ${p => (p.$dim ? "#333" : "#000")};
`

const TopMark = styled.div`
  position: absolute;
  left: 1002px;
  top: 0;
  border: 4px solid transparent;
  border-top: 4px solid #999;
  border-bottom: 0;
`

const Overlay = styled.div`
  position: absolute;
  left: 100px;
  top: 4px;
  width: 841px;
  height: 398px;
  border: 1px solid #9aa2ac;
  background: #252a33;
  font-size: 11px;
  overflow: hidden;
`

const OverlayNotch = styled.div`
  position: absolute;
  left: 936px;
  top: 42px;
  border: 4px solid transparent;
  border-right: 4px solid #aaa;
  border-left: 0;
`

const OverlayHead = styled.div`
  height: 41px;
  background: #1a1a1a;
  padding: 0 0 0 4px;
`

const OverlayTitle = styled.div`
  height: 20px;
  line-height: 20px;
  color: #e2de6c;
  font-size: 10.8px;
  white-space: nowrap;
  big { font-size: 12.5px; }
`

const OverlayTabs = styled.div`
  display: flex;
  align-items: center;
  height: 20px;
  margin-top: 2px;
  padding-left: 6px;
`

const OverlayTab = styled.div`
  width: 22px;
  height: 19px;
  line-height: 19px;
  text-align: center;
  font-size: ${p => (p.$small ? 9 : 12)}px;
  color: ${p => (p.$on ? "#d8d8d8" : "#5c5c5c")};
  background: ${p => (p.$on ? "#2a2f38" : "transparent")};
`

const OverlayLink = styled.div`
  font-size: 12px;
  color: #5c5c5c;
  margin-left: ${p => (p.$far ? 64 : 7)}px;
`

const Curve = styled.svg`
  display: block;
  width: 838px;
  height: 115px;
`

const StatRow = styled.div`
  display: grid;
  grid-template-columns: 80px 60px 60px 60px 80px 70px 70px 90px 80px 90px 90px;
  height: 14px;
  line-height: ${p => (p.$head ? 16 : 14)}px;
  padding-left: 4px;
  white-space: nowrap;
  margin-top: ${p => (p.$head ? 2 : 0)}px;
  ${p => p.$head && `font-size: 12px; color: #a4abb5;`}
  ${p => p.$total && `background: #1a1b1d; line-height: 15px;`}
`

const StatCell = styled.span`
  color: ${p => p.$c};
  font-size: ${p => (p.$big ? 12 : 11)}px;
`

const PriceAxis = styled.div`
  position: relative;
  width: 47px;
  flex: none;
  padding-top: 2px;
`

const PriceTick = styled.div`
  position: relative;
  height: 33.05px;
  line-height: 11px;
  padding-left: 6px;
  font-size: 9.5px;
  color: #fff;
  &::before {
    content: "";
    display: ${p => (p.$blank ? "none" : "block")};
    position: absolute;
    left: 0;
    top: 5px;
    width: 3px;
    height: 1px;
    background: #fff;
  }
`

const LastPrice = styled.div`
  position: absolute;
  left: 1px;
  top: 229px;
  width: 42px;
  height: 13px;
  padding-left: 5px;
  line-height: 13px;
  font-size: 9.5px;
  background: #fff;
  color: #000;
`

const TimeAxis = styled.div`
  display: flex;
  height: 19px;
`

const TimeTick = styled.div`
  position: relative;
  width: 64px;
  flex: none;
  padding: 2px 0 0 1px;
  font-size: 9.5px;
  line-height: 12px;
  white-space: nowrap;
  color: #fff;
  &::before {
    content: "";
    position: absolute;
    left: 0;
    top: 0;
    width: 1px;
    height: 3px;
    background: #fff;
  }
`

const ChartTabs = styled.div`
  height: 25px;
  display: flex;
  align-items: flex-start;
  padding: 3px 0 0 5px;
  border-bottom: 1px solid #fff;
`

const ChartTab = styled.div`
  height: 20px;
  padding: 0 ${p => (p.$on ? 10 : 12.4)}px;
  font-size: 12px;
  line-height: 19px;
  white-space: nowrap;
  color: ${p => (p.$on ? "#111" : "#8f8f8f")};
  ${p => p.$on
    ? `background: #fff; border: 1px solid #111; border-top: 0; border-right-width: 2px; border-bottom-width: 2px;`
    : `border-right: 1px solid #aaa; height: 14px; line-height: 14px; margin-top: 3px;`}
`

const TabArrows = styled.div`
  margin-left: auto;
  margin-right: 8px;
  display: flex;
  gap: 8px;
  font-size: 10px;
  color: #888;
`

const Terminal = styled.div`
  height: 125px;
  display: flex;
  padding-top: 2px;
`

const TermStrip = styled.div`
  width: 14px;
  flex: none;
  position: relative;
  display: flex;
  flex-direction: column;
  justify-content: flex-end;
  & > span { right: 3px; top: 0; }
`

const StripGrip = styled.div`
  height: 24px;
  margin: 0 3px 1px 2px;
  background: repeating-linear-gradient(135deg, #777 0, #777 1px, transparent 1px, transparent 3px);
`

const TermBody = styled.div`
  flex: 1;
  display: flex;
  flex-direction: column;
`

const TermTable = styled.div`
  height: 100px;
  flex: none;
  display: flex;
  background: #fff;
  border-top: 1px solid #cfcfcf;
  padding-left: 2px;
  overflow: hidden;
`

const OrderGrid = styled.div`
  width: 1456px;
  flex: none;
`

const OrderRow = styled.div`
  display: grid;
  grid-template-columns: ${orderCols};
  height: ${p => (p.$head ? 23 : 21)}px;
  align-items: stretch;
  ${p => p.$head && `background: #fff; border-top: 1px solid #f0f0f0; border-bottom: 1px solid #d8d8d8; margin-bottom: 1px;`}
  ${p => p.$on && `background: #3d96f5; color: #fff;`}
`

const HeadCell = styled.div`
  text-align: ${p => (p.$left ? "left" : "right")};
  padding: 0 3px 0 ${p => (p.$left ? 5 : 0)}px;
  line-height: 20px;
  font-size: 12px;
  border-right: 1px solid #e2e2e2;
`

const Sort = styled.span`
  margin-left: 8px;
  color: #999;
`

const OrderId = styled.div`
  display: flex;
  align-items: center;
  gap: 3px;
  padding-left: 3px;
  font-size: 12.5px;
  border-right: 1px solid #dcdcdc;
`

const OrderCell = styled.div`
  text-align: right;
  padding-right: 2px;
  line-height: 21px;
  font-size: 12px;
  letter-spacing: .1px;
  white-space: nowrap;
  border-right: 1px solid ${p => (p.$on ? "#8fc2f8" : "#dcdcdc")};
`

const Summary = styled.div`
  height: 21px;
  display: flex;
  align-items: center;
  gap: 10px;
  padding: 0 2px 0 3px;
  background: #c8c8c8;
  font-size: 12px;
  color: #111;
  white-space: nowrap;
  b { font-weight: 700; }
`

const SummaryIcon = styled.div`
  margin-right: -5px;
`

const SummaryTotal = styled.b`
  margin-left: auto;
`

const TermScroll = styled.div`
  width: 17px;
  flex: none;
  margin-left: 2px;
  display: flex;
  flex-direction: column;
  background: #f0f0f0;
`

const TermThumb = styled.div`
  height: 30px;
  margin: 32px 1px 0;
  display: flex;
  align-items: center;
  justify-content: center;
  font-size: 11px;
  color: #666;
  background: linear-gradient(90deg, #f4f4f4, #dcdcdc);
  border: 1px solid #a8a8a8;
`

const TermTabs = styled.div`
  flex: 1;
  display: flex;
  align-items: flex-start;
  padding-left: 4px;
  border-top: 1px solid #111;
`

const TermTab = styled.div`
  height: ${p => (p.$on ? 22 : 14)}px;
  padding: 0 9.6px;
  font-size: 12px;
  white-space: nowrap;
  ${p => p.$on
    ? `width: 44px; line-height: 20px; background: #fff; color: #222; border: 1px solid #111; border-top: 0; border-right-width: 2px; border-bottom-width: 2px; text-align: center; padding: 0;`
    : `margin-top: 3px; line-height: 14px; color: #8e8e8e; border-right: 1px solid #aaa;`}
`

const TabCount = styled.sub`
  margin-left: 2px;
  font-size: 10px;
  line-height: 0;
  color: #d9342b;
`

const StatusBar = styled.div`
  height: 24px;
  margin-top: 5px;
  display: flex;
  align-items: stretch;
  position: relative;
  border-top: 1px solid #c4c4c4;
  font-size: 12px;
`

const StatusCell = styled.div`
  ${p => (p.$last ? "flex: 1;" : `width: ${p.$w}px; flex: none; border-right: 1px solid #d0d0d0;`)}
  display: flex;
  align-items: center;
  gap: 3px;
  padding-left: ${p => (p.$last ? 8 : p.$first ? 2 : 7)}px;
  margin: 2px 0 3px;
  white-space: nowrap;
  color: #222;
`

const SignalBars = styled.div`
  width: 19px;
  height: 14px;
  background:
    linear-gradient(#5dae3a 0, #5dae3a 45%, transparent 45%) 0 0 / 100% 100% no-repeat,
    repeating-linear-gradient(90deg, #0f5d8a 0, #0f5d8a 2px, #fff 2px, #fff 3px);
  clip-path: polygon(0 60%, 100% 0, 100% 100%, 0 100%);
`

const ResizeGrip = styled.div`
  position: absolute;
  right: 0;
  bottom: 0;
  width: 14px;
  height: 14px;
  background: repeating-linear-gradient(135deg, transparent 0, transparent 2px, #999 2px, #999 3px);
  clip-path: polygon(100% 0, 100% 100%, 0 100%);
`

const BottomEdge = styled.div`
  flex: 1;
  background: linear-gradient(90deg, #111820 0, #2b3843 25%, #8fb8d4 27%, #b4d2e4 85%, #181d22 86%, #0c0f12 100%);
`

const Watermark = styled.div`
  position: absolute;
  right: 9px;
  bottom: 26px;
  display: flex;
  align-items: center;
  gap: 7px;
  color: #fff;
  font-size: 32px;
  font-weight: 300;
  line-height: 36px;
  white-space: nowrap;
  text-shadow: 1px 1px 1px #111, -1px 0 1px #555;
`
